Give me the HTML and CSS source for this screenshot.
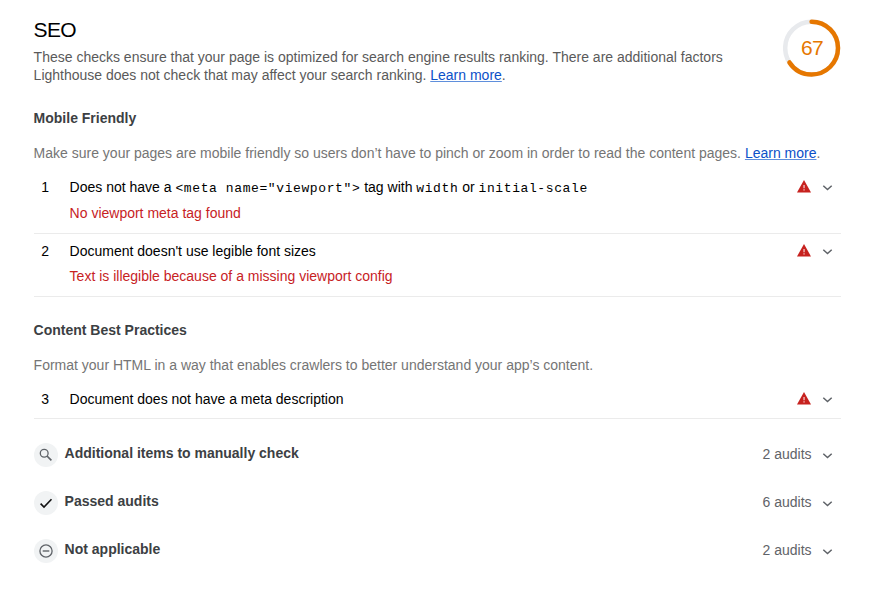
FILE: index.html
```html
<!DOCTYPE html>
<html lang="en">
<head>
<meta charset="utf-8">
<title>SEO</title>
<link rel="stylesheet" href="styles.css">
</head>
<body>
<svg width="0" height="0" class="defs">
  <symbol id="chevron" viewBox="0 0 11 8"><path d="M1.3 1.8L5.5 5.6L9.7 1.8" fill="none" stroke="#5f6368" stroke-width="1.5"/></symbol>
  <symbol id="warning" viewBox="0 0 14 13"><path d="M7 0L14 12.5H0Z" fill="#c7221f"/><path d="M6.4 5h1.3v3.2H6.4zM6.4 9.3h1.3v1.3H6.4z" fill="#f3c6c5"/></symbol>
</svg>
<main class="report">
  <header class="header">
    <div class="intro">
      <h1>SEO</h1>
      <p>These checks ensure that your page is optimized for search engine results ranking. There are additional factors<br>Lighthouse does not check that may affect your search ranking. <a href="#">Learn more</a>.</p>
    </div>
    <div class="gauge">
      <svg viewBox="0 0 58 58" width="58" height="58">
        <circle cx="28.6" cy="29.1" r="26.4" fill="none" stroke="#e8eaed" stroke-width="4.5"/>
        <circle cx="28.6" cy="29.1" r="26.4" fill="none" stroke="#e67700" stroke-width="4.5" stroke-linecap="round" pathLength="100" stroke-dasharray="65.8 100" transform="rotate(-90 28.6 29.1)"/>
      </svg>
      <span class="score">67</span>
    </div>
  </header>

  <section class="group">
    <h2>Mobile Friendly</h2>
    <p class="group-text">Make sure your pages are mobile friendly so users don’t have to pinch or zoom in order to read the content pages. <a href="#">Learn more</a>.</p>
    <div class="audit first">
      <span class="index">1</span>
      <div class="body"><div class="title">Does not have a <code>&lt;meta name="viewport"&gt;</code> tag with <code>width</code> or <code>initial-scale</code></div><div class="error">No viewport meta tag found</div></div>
      <svg class="warning"><use href="#warning"/></svg>
      <svg class="chevron"><use href="#chevron"/></svg>
    </div>
    <div class="audit">
      <span class="index">2</span>
      <div class="body"><div class="title">Document doesn't use legible font sizes</div><div class="error">Text is illegible because of a missing viewport config</div></div>
      <svg class="warning"><use href="#warning"/></svg>
      <svg class="chevron"><use href="#chevron"/></svg>
    </div>
  </section>

  <section class="group">
    <h2>Content Best Practices</h2>
    <p class="group-text">Format your HTML in a way that enables crawlers to better understand your app’s content.</p>
    <div class="audit short">
      <span class="index">3</span>
      <div class="body"><div class="title">Document does not have a meta description</div></div>
      <svg class="warning"><use href="#warning"/></svg>
      <svg class="chevron"><use href="#chevron"/></svg>
    </div>
  </section>

  <section class="clumps">
    <div class="clump">
      <svg class="badge" viewBox="0 0 24 24"><circle cx="12" cy="12" r="12" fill="#f1f3f4"/><circle cx="10.2" cy="10.2" r="3.9" fill="none" stroke="#5f6368" stroke-width="1.3"/><path d="M13 13L17.4 17.4" stroke="#5f6368" stroke-width="1.7"/></svg>
      <h3>Additional items to manually check</h3><span class="count">2 audits</span>
      <svg class="chevron"><use href="#chevron"/></svg>
    </div>
    <div class="clump">
      <svg class="badge" viewBox="0 0 24 24"><circle cx="12" cy="12" r="12" fill="#f1f3f4"/><path d="M6.6 12.6L10 16L17.5 8.3" fill="none" stroke="#111" stroke-width="1.6"/></svg>
      <h3>Passed audits</h3><span class="count">6 audits</span>
      <svg class="chevron"><use href="#chevron"/></svg>
    </div>
    <div class="clump">
      <svg class="badge" viewBox="0 0 24 24"><circle cx="12" cy="12" r="12" fill="#f1f3f4"/><circle cx="12" cy="12" r="6.1" fill="none" stroke="#5f6368" stroke-width="1.3"/><path d="M8.7 12H15.3" stroke="#5f6368" stroke-width="1.4"/></svg>
      <h3>Not applicable</h3><span class="count">2 audits</span>
      <svg class="chevron"><use href="#chevron"/></svg>
    </div>
  </section>
</main>
</body>
</html>
```
FILE: styles.css
```css
* { box-sizing: border-box; }
body {
  margin: 0;
  background: #fff;
  color: #000;
  font: 14px/18px "Liberation Sans", Arial, sans-serif;
}
h1, h2, h3, p { margin: 0; }
.defs { position: absolute; }
.report { width: 807.4px; margin-left: 33.6px; padding-top: 18px; }
.header { display: flex; justify-content: space-between; height: 66px; }
h1 { font-size: 21px; line-height: 24px; font-weight: 400; letter-spacing: -0.7px; }
.intro p { margin-top: 6px; color: #5a5a5a; white-space: nowrap; }
a { color: #0b50c8; text-decoration-color: #5f8fdc; }
.gauge { display: grid; width: 58px; height: 58px; margin-top: 1px; }
.gauge > * { grid-area: 1 / 1; }
.score { place-self: center; color: #e67700; font-size: 21px; line-height: 24px; letter-spacing: -0.7px; }
.group { padding-top: 24px; }
.group:first-of-type { padding-top: 25px; }
h2, h3 { color: #3c4043; font-size: 14px; line-height: 18px; font-weight: 700; }
.group-text { margin: 17px 0 8px; color: #757575; white-space: nowrap; }
.audit {
  display: flex;
  height: 63px;
  padding: 8px 8px 0 0;
  border-bottom: 1px solid #ebebeb;
}
.audit.first { height: 64px; }
.audit.short { height: 37px; }
.index { width: 23px; text-align: center; }
.body { flex: 1; margin-left: 13px; }
.error { margin-top: 7px; color: #c7221f; }
.first .error { margin-top: 8px; }
code { font: 13px/14px "Liberation Mono", "Courier New", monospace; letter-spacing: 0.6px; }
.warning { width: 14px; height: 13px; margin-top: 2px; }
.chevron { width: 11px; height: 8px; margin: 6px 0 0 11px; }
.clumps { padding-top: 24px; }
.clump { display: flex; height: 48px; padding-right: 8px; }
.badge { width: 24px; height: 24px; }
.clump h3 { flex: 1; margin: 1px 0 0 7px; }
.count { margin-top: 2px; color: #5f6368; }
.clump .chevron { margin: 9px 0 0 10.4px; }
```
